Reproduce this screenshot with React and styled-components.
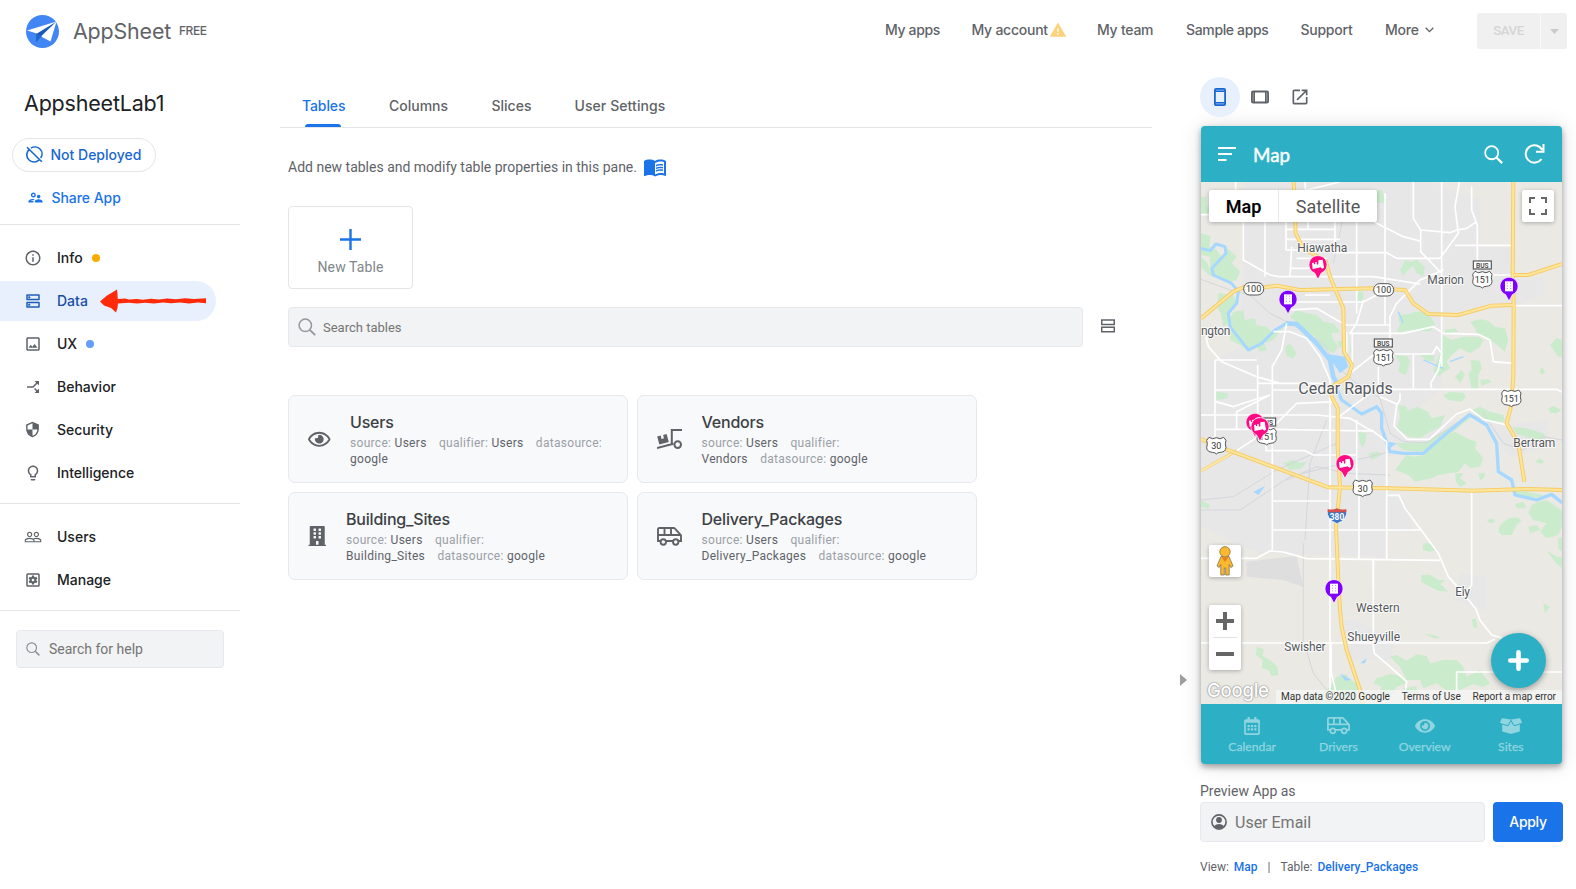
import React from "react";
import styled, { createGlobalStyle, css } from "styled-components";
import {
  MdInfoOutline,
  MdOutlineDns,
  MdOutlineImage,
  MdCallSplit,
  MdSecurity,
  MdLightbulbOutline,
  MdPeopleOutline,
  MdOutlineSettingsApplications,
  MdOutlineSupervisorAccount,
  MdMenuBook,
  MdOpenInNew,
  MdWarning,
} from "react-icons/md";
import { FaRegEye, FaEye, FaBuilding, FaRegCalendarAlt, FaBoxOpen } from "react-icons/fa";

const Global = createGlobalStyle`
  * { box-sizing: border-box; }
  body { margin: 0; background: #fff; font-family: Roboto, "Liberation Sans", sans-serif; color: #5f6368; }
  svg { display: block; flex: none; }
`;

const brandFont = css`
  font-family: Inter, Roboto, sans-serif;
`;

/* ---------- layout ---------- */

const Page = styled.div`
  width: 1576px;
  height: 889px;
  overflow: hidden;
  display: flex;
  flex-direction: column;
`;

const Header = styled.header`
  ${brandFont}
  height: 62px;
  flex: none;
  display: flex;
  align-items: center;
  padding: 0 9px 0 26px;
`;

const Brand = styled.div`
  font-size: 21.4px;
  letter-spacing: -0.15px;
  margin-left: 14px;
  padding-bottom: 1px;
  width: 106px;
  white-space: nowrap;
`;

const Plan = styled.div`
  font-size: 12px;
  font-weight: 500;
  letter-spacing: -0.45px;
  padding-bottom: 2px;
`;

const TopNav = styled.nav`
  margin-left: auto;
  display: flex;
  align-items: center;
`;

const TopLink = styled.a`
  display: flex;
  align-items: center;
  gap: ${(p) => p.$gap || 1}px;
  width: ${(p) => p.$w}px;
  padding-bottom: 3px;
  font-size: 14px;
  font-weight: 500;
  letter-spacing: ${(p) => p.$ls || -0.25}px;
  white-space: nowrap;
`;

const SaveGroup = styled.div`
  display: flex;
  height: 36px;
  width: 90px;
  background: #f0f0f0;
  border-radius: 3px;
  color: #d5d5d5;
`;

const SaveLabel = styled.div`
  flex: 1;
  display: flex;
  align-items: center;
  justify-content: center;
  padding-bottom: 1px;
  font-family: Roboto, sans-serif;
  font-size: 13.3px;
  font-weight: 500;
  letter-spacing: -0.5px;
  border-right: 1px solid #fafafa;
`;

const SaveCaret = styled.div`
  width: 26px;
  display: flex;
  align-items: center;
  justify-content: center;
`;

const Body = styled.div`
  flex: 1;
  display: flex;
`;

/* ---------- sidebar ---------- */

const Sidebar = styled.aside`
  ${brandFont}
  width: 240px;
  flex: none;
`;

const AppName = styled.h1`
  margin: 0;
  padding: 26px 0 0 24px;
  height: 76px;
  font-size: 21.5px;
  line-height: 31px;
  font-weight: 400;
  letter-spacing: -0.2px;
  color: #202124;
`;

const DeployPill = styled.div`
  margin-left: 12px;
  width: 144px;
  height: 34px;
  border: 1px solid #e3e5e8;
  border-radius: 17px;
  display: flex;
  align-items: center;
  gap: 7.5px;
  padding: 0 0 1px 13px;
  font-size: 14px;
  font-weight: 500;
  letter-spacing: 0;
  color: #1967d2;
  white-space: nowrap;
`;

const ShareLink = styled.div`
  height: 52px;
  display: flex;
  align-items: center;
  gap: 7.5px;
  padding: 0 0 2px 27px;
  font-size: 14px;
  font-weight: 500;
  letter-spacing: -0.05px;
  color: #1a73e8;
`;

const NavGroup = styled.div`
  border-top: 1px solid #e4e6ea;
  padding: ${(p) => p.$pad};
`;

const NavItem = styled.div`
  position: relative;
  width: 216px;
  height: 40px;
  margin-bottom: 3px;
  display: flex;
  align-items: center;
  padding: 0 0 1px 24px;
  border-radius: 0 20px 20px 0;
  font-size: 14px;
  font-weight: 500;
  color: ${(p) => (p.$active ? "#174ea6" : "#202124")};
  background: ${(p) => (p.$active ? "#e8f0fe" : "transparent")};
`;

const NavIcon = styled.span`
  width: 33px;
  color: ${(p) => (p.$active ? "#1f5cb8" : "#5f6368")};
  svg { transform: ${(p) => (p.$turn ? "rotate(90deg)" : "none")}; }
`;

const Dot = styled.span`
  width: 8px;
  height: 8px;
  border-radius: 50%;
  margin-left: 9px;
  background: ${(p) => p.$color};
`;

const Arrow = styled.svg`
  position: absolute;
  left: 99px;
  top: 8px;
`;

const Field = styled.div`
  display: flex;
  align-items: center;
  background: #f1f3f4;
  border: 1px solid #e6e8eb;
  border-radius: 4px;
  color: #757575;
  font-family: Roboto, sans-serif;
  width: ${(p) => p.$w}px;
  height: ${(p) => p.$h}px;
  padding-left: ${(p) => p.$pl}px;
  gap: ${(p) => p.$gap}px;
  font-size: ${(p) => p.$fs}px;
  letter-spacing: ${(p) => p.$ls || 0}px;
`;

const HelpWrap = styled.div`
  border-top: 1px solid #e4e6ea;
  padding: 19px 16px;
`;

/* ---------- main ---------- */

const Main = styled.main`
  width: 872px;
  margin-left: 40px;
  flex: none;
`;

const Tabs = styled.div`
  ${brandFont}
  height: 66px;
  padding: 20px 0 0 22px;
  display: flex;
  border-bottom: 1px solid #e4e6ea;
`;

const Tab = styled.div`
  height: 45px;
  width: ${(p) => p.$w}px;
  font-size: 14px;
  font-weight: 500;
  letter-spacing: ${(p) => p.$ls || 0}px;
  line-height: 48px;
  color: ${(p) => (p.$active ? "#1a73e8" : "#5f6368")};
`;

const Underline = styled.div`
  width: 36px;
  height: 3px;
  margin: -3px 0 0 3px;
  border-radius: 3px 3px 0 0;
  background: #1a73e8;
`;

const Content = styled.div`
  padding: 28px 0 0 8px;
`;

const Intro = styled.div`
  display: flex;
  align-items: center;
  gap: 6px;
  height: 22px;
  font-size: 14px;
  white-space: nowrap;
  padding-bottom: 1px;
`;

const NewTable = styled.button`
  margin: 28px 0 18px;
  width: 125px;
  height: 83px;
  border: 1px solid #e3e5e8;
  border-radius: 4px;
  background: #fff;
  padding: 8px 0 0;
  display: flex;
  flex-direction: column;
  align-items: center;
  justify-content: center;
  gap: 9px;
  font: 400 14px Roboto, sans-serif;
  letter-spacing: 0.1px;
  color: #80868b;
`;

const SearchRow = styled.div`
  display: flex;
  align-items: center;
  gap: 18px;
  color: #5f6368;
`;

const CardGrid = styled.div`
  margin-top: 48px;
  display: grid;
  grid-template-columns: 340px 340px;
  gap: 9px;
`;

const Card = styled.div`
  height: 88px;
  border: 1px solid #e6e8ec;
  border-radius: 7px;
  background: #f8f9fb;
  display: flex;
  align-items: center;
  gap: 19.5px;
  padding-left: 19px;
`;

const CardText = styled.div`
  width: 256px;
`;

const CardTitle = styled.div`
  ${brandFont}
  font-size: 16px;
  font-weight: 500;
  letter-spacing: -0.2px;
  line-height: 22px;
  margin-bottom: 2px;
  color: #3c4043;
`;

const Meta = styled.div`
  font-size: 12px;
  line-height: 16px;
  letter-spacing: 0.3px;
  color: #9aa0a6;
  b { font-weight: 400; color: #5f6368; margin-right: 9px; }
`;

const Keep = styled.span`
  white-space: nowrap;
`;

/* ---------- preview ---------- */

const Collapse = styled.div`
  width: 48px;
  padding: 612px 0 0 28px;
`;

const Preview = styled.aside`
  width: 363px;
  padding-top: 15px;
`;

const Devices = styled.div`
  display: flex;
  height: 40px;
  margin-bottom: 9px;
`;

const Device = styled.div`
  width: 40px;
  height: 40px;
  border-radius: 50%;
  display: flex;
  align-items: center;
  justify-content: center;
  color: ${(p) => (p.$active ? "#1a67d2" : "#5f6368")};
  background: ${(p) => (p.$active ? "#e8f0fe" : "transparent")};
`;

const Phone = styled.div`
  margin-left: 1px;
  width: 361px;
  height: 638px;
  border-radius: 4px;
  overflow: hidden;
  background: #2db0c5;
  box-shadow: 0 3px 6px rgba(0, 0, 0, 0.35), 0 1px 22px rgba(0, 0, 0, 0.13);
`;

const PhoneBar = styled.div`
  height: 56px;
  display: flex;
  align-items: center;
  padding: 0 17px 0 17px;
  color: #fff;
  font: 400 18.8px Lato, sans-serif;
`;

const PhoneTitle = styled.div`
  margin: 1px auto 0 17px;
  -webkit-text-stroke: 0.45px currentColor;
`;

const MapArea = styled.div`
  position: relative;
  height: 522px;
`;

const Floating = styled.div`
  position: absolute;
  display: flex;
  align-items: center;
  justify-content: center;
  background: #fff;
  border-radius: 2px;
  box-shadow: 0 1px 4px rgba(0, 0, 0, 0.28);
`;

const MapType = styled(Floating)`
  left: 8px;
  top: 8px;
  height: 32px;
  width: 168px;
  font-size: 18px;
  color: #565656;
`;

const MapTypeOption = styled.div`
  flex: none;
  width: ${(p) => p.$w}px;
  text-align: center;
  height: 32px;
  line-height: 34px;
  font-weight: ${(p) => (p.$on ? 500 : 400)};
  color: ${(p) => (p.$on ? "#000" : "#565656")};
  -webkit-text-stroke: ${(p) => (p.$on ? "0.2px #000" : "0")};
  border-right: ${(p) => (p.$on ? "1px solid #e8e8e8" : 0)};
`;

const Fullscreen = styled(Floating)`
  right: 8px;
  top: 8px;
  width: 32px;
  height: 32px;
`;

const Pegman = styled(Floating)`
  left: 8px;
  top: 363px;
  width: 32px;
  height: 32px;
`;

const ZoomBox = styled(Floating)`
  left: 8px;
  top: 423px;
  width: 32px;
  height: 65px;
`;

const AddButton = styled(Floating)`
  right: 16px;
  top: 451px;
  width: 55px;
  height: 55px;
  border-radius: 50%;
  background: #2db0c5;
  box-shadow: 0 2px 6px rgba(0, 0, 0, 0.35);
`;

const GoogleMark = styled.div`
  position: absolute;
  left: 6px;
  bottom: 2px;
  ${brandFont}
  font-size: 18.5px;
  font-weight: 500;
  letter-spacing: -0.25px;
  line-height: 24px;
  color: #fff;
  text-shadow: 0 0 2px #888, 0 0 1px #777;
`;

const Attribution = styled.div`
  position: absolute;
  right: 0;
  bottom: 0;
  height: 14px;
  width: 286px;
  padding: 0 6px 1px 5px;
  display: flex;
  justify-content: space-between;
  align-items: center;
  background: rgba(245, 245, 245, 0.75);
  font-size: 10px;
  color: #333;
  white-space: nowrap;
`;

const PhoneNav = styled.div`
  height: 60px;
  padding: 0 8px;
  display: flex;
`;

const PhoneTab = styled.div`
  flex: 1;
  display: flex;
  flex-direction: column;
  align-items: center;
  padding-top: 13px;
  gap: 4px;
  color: #91d5e0;
  font: 400 12.2px/16px Lato, sans-serif;
  -webkit-text-stroke: 0.25px currentColor;
`;

const PhoneTabIcon = styled.div`
  height: 18px;
  display: flex;
  align-items: center;
`;

const PreviewLabel = styled.div`
  margin-top: 19px;
  height: 19px;
  font-size: 14px;
  line-height: 17px;
`;

const ApplyRow = styled.div`
  display: flex;
  gap: 8px;
`;

const Apply = styled.button`
  ${brandFont}
  width: 70px;
  height: 40px;
  border: 0;
  padding: 0 0 1px;
  border-radius: 4px;
  background: #1a73e8;
  color: #fff;
  font-size: 14px;
  font-weight: 500;
  letter-spacing: -0.3px;
`;

const Status = styled.div`
  margin-top: 17px;
  display: flex;
  font-size: 12px;
  line-height: 16px;
  white-space: nowrap;
  b { font-weight: 500; color: #1a73e8; margin-left: 5px; }
  i { font-style: normal; margin: 0 10px 0 10px; }
`;

/* ---------- drawings ---------- */

const Search = ({ size, color, w = 1.5 }) => (
  <svg width={size} height={size} viewBox="0 0 18 18" fill="none" stroke={color} strokeWidth={w}>
    <circle cx="7.3" cy="7.3" r="6.2" />
    <path d="M11.8 11.8 17.2 17.2" strokeWidth={w * 1.25} />
  </svg>
);

const Logo = () => (
  <svg width="33" height="33" viewBox="0 0 33 33">
    <circle cx="16.5" cy="16.5" r="16.5" fill="#4285f4" />
    <path d="M10.5 18.5 30 7 17 19 10 27Z" fill="#1a56b8" />
    <path d="M1 15.5 30.5 6.5 11 18.5Z" fill="#fff" />
    <path d="M30.5 6.5 24.5 26.5 15 21.5Z" fill="#fff" />
    <path d="M10 27 10.5 18.8 16 21Z" fill="#2466cf" />
  </svg>
);

const NotDeployed = () => (
  <svg width="17" height="17" viewBox="0 0 17 17" fill="none" stroke="currentColor" strokeWidth="1.6">
    <path d="M5 2.2A7 7 0 0 1 14.7 12M13 14A7 7 0 0 1 3 3.6M1 1.2 15.8 15.8" />
  </svg>
);

const Agenda = () => (
  <svg width="14" height="14" viewBox="0 0 14 14" fill="none" stroke="currentColor" strokeWidth="1.5" style={{ marginBottom: 3 }}>
    <path d="M.75 1H13.25V5.5H.75ZM.75 8.2H13.25V12.7H.75Z" />
  </svg>
);

const Handset = ({ turned }) => (
  <svg width="20" height="20" viewBox="0 0 20 20" fill="none" stroke="currentColor">
    <g transform={turned ? "rotate(90 10 10) translate(10 10) scale(1.1 1) translate(-10 -10)" : undefined}>
      <rect x="4.9" y="1.9" width="10.2" height="16.2" rx="1.2" strokeWidth="1.8" />
      <path d="M5 4.2H15M5 15.8H15" strokeWidth="1.6" />
      <path d="M5 3H15M5 17H15" strokeWidth="1.2" opacity=".6" />
    </g>
  </svg>
);

const Van = ({ w }) => (
  <svg width={w} height={w * 0.76} viewBox="0 0 25 19" fill="none" stroke="currentColor" strokeWidth="1.9">
    <path d="M4 14H1V2.2Q1 1 2.2 1H16.5Q17.4 1 18 1.7L24 8.3V14H21.5M8.8 14H16.2M1 8H24M7.5 1V8M14 1V8" />
    <circle cx="6.3" cy="15" r="2.7" />
    <circle cx="18.7" cy="15" r="2.7" />
  </svg>
);

const Dolly = () => (
  <svg width="25" height="20" viewBox="0 0 25 20" fill="none" stroke="currentColor" strokeWidth="2">
    <path d="M0 19 16.5 14.8M25 1H14.8V14.5" />
    <circle cx="20.7" cy="15.6" r="3.3" />
    <path d="M0.2 7.5 3.6 6.6 4.6 10 7 9.3 6.1 6 9.6 5 11.8 13 2.3 15.6Z" fill="currentColor" stroke="none" />
  </svg>
);

const UserCircle = () => (
  <svg width="16" height="16" viewBox="0 0 16 16">
    <circle cx="8" cy="8" r="7.1" fill="none" stroke="#5f6368" strokeWidth="1.6" />
    <circle cx="8" cy="6" r="2.9" fill="#5f6368" />
    <path d="M2.7 12.2Q8 7.8 13.3 12.2 8 17.5 2.7 12.2Z" fill="#5f6368" />
  </svg>
);

/* ---------- map ---------- */

const parks = [
  "33,50 50,50 50,80 80,80 80,104 33,104",
  "155,30 190,38 230,30 250,45 240,58 195,60",
  "500,35 540,34 575,30 590,70 560,66 550,48 510,55",
  "33,160 62,168 58,200 78,208 100,235 112,205 140,230 125,250 150,275 140,300 120,305 85,290 60,275 60,230 33,225",
  "33,230 50,245 60,270 75,285 60,288 33,262",
  "85,340 130,345 140,370 115,400 118,430 100,440 92,400 80,380",
  "120,415 130,395 160,390 165,420 195,415 200,435 230,440 245,455 268,440 290,430 250,480 215,492 180,515 150,495 120,480",
  "200,500 222,490 232,510 210,515",
  "285,500 300,492 320,520 310,535 290,530",
  "300,410 320,390 345,398 380,405 400,425 430,430 450,455 425,460 430,480 445,500 430,520 395,500 375,470 340,445",
  "630,270 645,240 665,246 680,238 705,262 700,290 680,280 668,258 650,275 640,288",
  "280,850 310,840 330,848 350,845 335,865 300,870",
  "505,755 530,760 525,790 518,802 508,785",
  "535,820 565,815 575,825 545,840",
  "33,960 60,975 55,985 33,980",
  "694,1185 720,1184 745,1200 765,1200 752,1212 775,1235 745,1232 720,1220 694,1205",
  "700,1360 730,1365 752,1372 735,1376",
  "200,1400 222,1408 218,1428 240,1440 262,1460 265,1485 245,1488 235,1470 215,1465 218,1440 198,1425",
  "440,1490 470,1482 478,1498 500,1510 515,1560 520,1572 350,1572 345,1560 395,1540 420,1520",
  "600,1430 620,1425 650,1442 680,1423 710,1428 720,1450 760,1440 800,1440 820,1460 830,1490 870,1470 900,1510 880,1522 850,1512 810,1530 770,1532 740,1510 700,1525 690,1500 650,1500 630,1460",
  "560,1495 600,1482 640,1490 650,1510 620,1520 600,1555 570,1540 575,1520 550,1510",
  "640,1525 680,1518 680,1550 650,1545",
  "500,335 520,335 520,365 500,365",
  "440,485 465,480 450,505",
  "78,635 115,640 110,655 80,660",
  "845,1318 858,1316 862,1345 850,1342",
  "1060,1270 1080,1280 1065,1300",
  "1070,1112 1100,1130 1116,1130 1116,1165 1098,1150",
  "480,500 478,485 485,510 480,525",
];

/* parks east of the river, in their own origin */
const eastParks = [
  "55,75 90,72 100,65 130,65 155,85 165,105 150,125 90,120 50,128 60,105",
  "195,120 225,115 235,125 195,130",
  "270,95 300,88 325,92 345,110 375,115 385,150 375,185 345,160 290,130 285,115",
  "188,135 215,150 250,140 295,140 310,150 300,170 270,190 240,175 215,195 200,215 210,235 170,260 160,240 180,190",
  "45,195 80,198 90,215 78,255 55,245 60,220",
  "120,195 160,193 165,215 140,212",
  "225,260 245,240 255,255 240,280",
  "272,210 300,212 305,235 295,255 295,298 275,298 265,250 275,240",
  "300,270 325,268 335,275 305,288",
  "510,165 530,145 550,150 550,200 535,200",
  "478,242 486,232 496,245 486,255",
  "190,315 210,306 250,308 258,320 245,335 205,330",
  "55,345 75,348 85,362 110,350 145,365 155,385 195,375 180,410 150,425 120,445 85,440 50,415 60,380",
  "80,458 140,455 180,430 265,378 275,380 200,440 150,480 110,485 70,480 45,460",
  "275,360 300,350 330,365 370,375 375,395 340,395 295,385",
  "398,410 440,415 490,430 500,445 470,450 410,432",
  "505,355 520,348 545,360 530,370 510,368",
  "80,495 100,500 130,495 180,450 225,425 260,445 290,455 285,475 310,505 300,530 270,535 255,520 235,545 175,555 155,565 105,575 85,555 45,540 60,520",
  "225,550 250,550 240,565 260,580 240,592 228,575",
  "295,550 315,548 312,565 300,570",
  "395,598 440,605 490,615 480,622 440,622 405,615",
  "320,690 340,685 345,695 330,700",
  "360,705 385,685 410,682 425,690 410,705 395,735 365,735 355,725",
  "405,642 430,635 440,655 410,655",
  "455,645 475,635 500,630 550,665 550,700 535,735 500,745 480,725 500,700 460,690 445,670",
  "445,710 470,705 480,720 450,730",
  "535,745 550,740 550,790 535,775",
  "130,758 155,762 170,780 150,785 128,780",
  "465,515 480,505 492,515 485,522",
];

const urban = [
  "160,6 720,6 870,60 870,200 960,200 960,290 1000,300 960,375 755,400 755,628 590,760 590,1130 250,1120 80,900 75,540 150,500 160,300",
  "33,540 80,540 250,900 230,1130 33,1040",
  "960,375 1000,300 1060,290 1060,345 980,377",
  "590,700 800,730 760,790 590,830",
  "880,720 950,735 1075,720 1075,800 960,830",
  "460,1320 500,1320 550,1350 620,1370 600,1440 480,1440",
  "810,1180 890,1190 890,1290 790,1260",
  "590,940 630,946 660,1000 670,1060 590,1045",
];

const water = [
  "M33 205 60 212 78 192 105 200 108 220 66 265 70 285 125 310 145 335 140 370 115 400 120 440 150 478 175 510 215 490 255 450 290 430 320 432 380 490 420 540 430 590 445 620",
  "M440 625 455 660 515 702 560 680 575 700 575 745 600 815 640 820 700 820 760 768 838 704 890 735 920 790 925 875 965 900 975 945 1040 960 1085 943 1116 968",
];

const roads = [
  "M137 6V60M160 120V240L240 285 265 290M225 120V290M33 104 60 104M288 125V210H415M305 200 300 290M345 6 355 150M350 30 450 6M285 148H435M290 178H450",
  "M545 120 560 130 640 170 690 183M670 6V115L692 150V215L755 280V560M755 6V280M808 6 795 80 805 160 750 235 620 235 590 218H430M845 20V90L862 135V280M692 150 780 158 800 150 830 145 860 125M795 196H965",
  "M585 40V435M500 90V400M435 125V190M320 235H410M300 265H410M265 290H550L690 312M345 345H420M300 390 380 385 440 420 470 435H600M310 366H520L560 345 590 330M600 540V410L620 370 690 300 760 270M520 360 500 430 480 460H600",
  "M550 525 480 580M470 455V530M487 455V570M615 522H728L740 500 755 520 745 570 722 610 725 625M670 525V628M600 460H640L730 440 760 460 865 463 900 480 910 545 968 550M885 285H968M970 377H1116",
  "M48 470 55 500 95 545 200 590 270 610M75 540H200M75 540V800M203 555V780M250 455H300L350 475 390 530 420 600 420 640M247 555V1110M290 430 275 510 247 560V630H440M203 610H400M33 705H380L480 715M78 630H200M78 665 130 680 160 670 240 645M140 750V695L240 645M78 748H250L545 753M228 780V812H345L370 825H500M140 812 250 740 320 670 440 665M565 560V620M420 640V780",
  "M480 628H1100L1116 636M630 640 630 660 620 675 612 738 652 778H718L800 702 840 687 880 718 950 735M570 650 620 672M545 750 590 785V1140M500 720V930M420 700V1560M480 715 545 753M440 715 540 640",
  "M247 963H418M247 1050H695M507 930V1138M590 946H627L645 985 745 1120 775 1190 820 1240 858 1288 870 1320 905 1365 940 1375M33 1135H200L240 1113 280 1116 350 1136 750 1141M845 935V1215L830 1235M550 1140V1230",
  "M33 1389H890L915 1378M550 1140 550 1400 553 1420 600 1460 650 1505 645 1545M423 1390V1475L440 1545M800 1540V1476H1116",
];

const highways = [
  "M33 415 130 335 160 322H225L260 317 330 330 550 325 645 330 670 370 715 402 805 405 905 377 970 375",
  "M968 285H1015L1116 252",
  "M33 777 100 805 415 922 600 925 850 932 1020 927 1116 930",
  "M970 6 968 285 971 375 970 590 963 680 950 730 985 790 1003 905",
  "M311 6 317 160 340 205 408 245 420 290 460 385 462 515 486 555 475 590 425 620 425 650 443 685V800L450 920 438 1040 445 1200 450 1290 455 1340 470 1410 510 1530 520 1572",
];

const places = [
  ["Hiawatha", 322, 217, 150, 36],
  ["Marion", 712, 312, 110, 36],
  ["ngton", 33, 465, 88, 36],
  ["Cedar Rapids", 325, 641, 283, 48],
  ["Bertram", 970, 802, 126, 36],
  ["Ely", 796, 1248, 44, 36],
  ["Western", 498, 1296, 131, 36],
  ["Shueyville", 472, 1384, 158, 36],
  ["Swisher", 283, 1414, 124, 36],
];

const Shield = ({ x, y, label, bus }) => (
  <g>
    {bus && (
      <g>
        <rect x={x - 27} y={y - 57} width="54" height="24" fill="#fff" stroke="#555" strokeWidth="3.5" />
        <text x={x} y={y - 37} textAnchor="middle" fontSize="20" fontWeight="600" fill="#444">BUS</text>
      </g>
    )}
    <path
      d={`M${x - 22} ${y - 26}Q${x - 11} ${y - 18} ${x} ${y - 25}Q${x + 11} ${y - 18} ${x + 22} ${y - 26}L${x + 29} ${y - 17}Q${x + 25} ${y - 8} ${x + 29} ${y + 5}Q${x + 28} ${y + 18} ${x + 12} ${y + 19}Q${x + 4} ${y + 19} ${x} ${y + 24}Q${x - 4} ${y + 19} ${x - 12} ${y + 19}Q${x - 28} ${y + 18} ${x - 29} ${y + 5}Q${x - 25} ${y - 8} ${x - 29} ${y - 17}Z`}
      fill="#fff"
      stroke="#555"
      strokeWidth="3"
    />
    <text x={x} y={y + 10} textAnchor="middle" fontSize="27" fill="#333">{label}</text>
  </g>
);

const Route = ({ x, y }) => (
  <g>
    <rect x={x - 30} y={y - 18} width="60" height="37" rx="18" fill="#fff" stroke="#555" strokeWidth="3" />
    <text x={x} y={y + 10} textAnchor="middle" fontSize="27" fill="#333">100</text>
  </g>
);

const Pin = ({ x, y, kind }) => {
  const site = kind === "site";
  return (
    <g transform={`translate(${x} ${y})`}>
      <path
        d="M0 45 -10 26A27 27 0 1 1 10 26Z"
        fill={site ? "#8000ff" : "#ff0a85"}
        stroke="#fff"
        strokeWidth="2"
      />
      {site ? (
        <g>
          <path d="M-12 -14H12V16H-12Z" fill="#fff" />
          <path d="M-5 -10V10M5 -10V10" stroke="#8000ff" strokeWidth="3" strokeDasharray="3 5" opacity=".5" />
        </g>
      ) : (
        <path d="M-18 -4 -13 -5 -12 0 -8 -1 -9 -6 -4 -7 -3 1 1 0V-12L14 -14 18 10 13 13 8 9 2 10 -16 14Z" fill="#fff" />
      )}
    </g>
  );
};

const MapDrawing = () => (
  <svg width="361" height="522" viewBox="33 6 1083 1566" fontFamily="Roboto, sans-serif">
    <rect x="33" y="6" width="1083" height="1566" fill="#ebe9e4" />
    {urban.map((p) => <polygon key={p} points={p} fill="#e7e7e8" />)}
    <path d="M170 1145 320 1128 340 1220 280 1200 170 1190Z" fill="#dedede" />
    {parks.map((p) => <polygon key={p} points={p} fill="#cbebcd" />)}
    <g transform="translate(570 330)">
      {eastParks.map((p) => <polygon key={p} points={p} fill="#cbebcd" />)}
    </g>
    <g fill="none" stroke="#d4d6da" strokeWidth="3">
      <path d="M33 298 120 330 180 345 240 400 300 430 400 490 440 560 500 610 570 655 600 760 640 785 710 788 770 750 838 700 880 720M345 1080 360 850 410 720M33 960 130 950 260 870 440 790M33 990 150 990 300 890 420 860 600 815M340 1090 340 1380 370 1480 410 1530M460 40V110L430 250" />
      <path d="M290 900 380 860 470 880 600 885M880 700 940 790 1000 810 1060 770 1116 780" />
    </g>
    <g fill="none" stroke="#a6d8ff" strokeLinejoin="round">
      <path d={water[0]} strokeWidth="9" />
      <path d="M290 430 320 432 380 490 420 540 430 590 445 620" strokeWidth="14" />
      <path d={water[1]} strokeWidth="10" />
      <path d="M625 395 640 430M700 540 760 565M780 545 820 530" strokeWidth="4" />
    </g>
    <path d="M395 520 465 530 475 560 450 580 430 550ZM190 935 225 918 205 945ZM450 1480 485 1500 465 1502ZM510 1450 530 1435 525 1450ZM595 785 620 790 600 805Z" fill="#a6d8ff" />
    <g fill="none" stroke="#fff" strokeWidth="5" strokeLinejoin="round">
      {roads.map((d) => <path key={d} d={d} />)}
    </g>
    <g fill="none" strokeLinejoin="round">
      <path d="M33 873 140 812" stroke="#f4cf73" strokeWidth="9" />
      <path d="M33 873 140 812" stroke="#feeaa6" strokeWidth="5" />
      {highways.map((d) => <path key={d} d={d} stroke="#f6cb62" strokeWidth="12" />)}
      {highways.map((d) => <path key={d} d={d} stroke="#fee59c" strokeWidth="6.5" />)}
    </g>
    {places.map(([name, x, y, w, size]) => (
      <text
        key={name}
        x={x}
        y={y}
        textLength={w}
        fontSize={size}
        fill="#55585c"
        stroke="#fff"
        strokeOpacity=".8"
        strokeWidth="6"
        strokeLinejoin="round"
        paintOrder="stroke"
      >
        {name}
      </text>
    ))}
    <Route x={191} y={326} />
    <Route x={581} y={329} />
    <Shield x={877} y={300} label="151" bus />
    <Shield x={580} y={534} label="151" bus />
    <Shield x={964} y={656} label="151" />
    <Shield x={79} y={798} label="30" />
    <Shield x={230} y={771} label="151" bus />
    <Shield x={518} y={926} label="30" />
    <path d="M412 990H470Q474 1018 441 1031 408 1018 412 990Z" fill="#3e78c4" stroke="#fff" strokeWidth="2" />
    <path d="M413 997V987Q427 991 441 985 455 991 469 987V997Z" fill="#d3524f" />
    <text x="441" y="1020" textAnchor="middle" fontSize="25" fontWeight="700" fill="#fff">380</text>
    <Pin x={384} y={253} />
    <Pin x={294} y={357} kind="site" />
    <Pin x={957} y={318} kind="site" />
    <Pin x={195} y={726} />
    <Pin x={210} y={739} />
    <Pin x={465} y={850} />
    <Pin x={432} y={1225} kind="site" />
  </svg>
);

/* ---------- data ---------- */

const nav = [
  { label: "Info", icon: <MdInfoOutline size={18} />, dot: "#f9ab00" },
  { label: "Data", icon: <MdOutlineDns size={18} />, active: true },
  { label: "UX", icon: <MdOutlineImage size={18} />, dot: "#669df6" },
  { label: "Behavior", icon: <MdCallSplit size={18} />, turn: true },
  { label: "Security", icon: <MdSecurity size={17} /> },
  { label: "Intelligence", icon: <MdLightbulbOutline size={18} /> },
];

const admin = [
  { label: "Users", icon: <MdPeopleOutline size={18} /> },
  { label: "Manage", icon: <MdOutlineSettingsApplications size={18} /> },
];

const tables = [
  { name: "Users", icon: <FaRegEye size={22.5} /> },
  { name: "Vendors", icon: <Dolly /> },
  { name: "Building_Sites", icon: <FaBuilding size={20} style={{ width: 18.5 }} /> },
  { name: "Delivery_Packages", icon: <Van w={25} /> },
];

const NavList = ({ items }) =>
  items.map((it) => (
    <NavItem key={it.label} $active={it.active}>
      <NavIcon $active={it.active} $turn={it.turn}>{it.icon}</NavIcon>
      {it.label}
      {it.dot && <Dot $color={it.dot} />}
      {it.active && (
        <Arrow width="110" height="24" viewBox="0 0 110 24">
          <path d="M1 12.5 8 6.5 14 3 18 0.5 18.5 5 18.8 10 26 9.6 30 10.5 38 9.9 44 10.8 52 9.7 60 10.5 68 9.6 77 10.2 86 9.2 95 10 107 9.2V14.2L99 13.5 90 14.4 81 13.5 72 14.2 64 13.4 55 14.6 46 13.7 38 14.6 30 13.8 19 14.4 18.5 19 17 23.5 12 19 5 16.5Z" fill="#fe2a08" />
        </Arrow>
      )}
    </NavItem>
  ));

export default function App() {
  return (
    <Page>
      <Global />
      <Header>
        <Logo />
        <Brand>AppSheet</Brand>
        <Plan>FREE</Plan>
        <TopNav>
          <TopLink $w={86.5} $ls={-0.35}>My apps</TopLink>
          <TopLink $w={125.5}>My account <MdWarning size={18} color="#fdd27c" /></TopLink>
          <TopLink $w={89}>My team</TopLink>
          <TopLink $w={114.5} $ls={-0.35}>Sample apps</TopLink>
          <TopLink $w={84.5}>Support</TopLink>
          <TopLink $w={92} $gap={6}>
            More
            <svg width="9" height="6" viewBox="0 0 9 6" fill="none" stroke="currentColor" strokeWidth="1.3">
              <path d="M0.7 0.7 4.5 4.6 8.3 0.7" />
            </svg>
          </TopLink>
          <SaveGroup>
            <SaveLabel>SAVE</SaveLabel>
            <SaveCaret>
              <svg width="9" height="5" viewBox="0 0 9 5"><path d="M0 0H9L4.5 5Z" fill="#cacaca" /></svg>
            </SaveCaret>
          </SaveGroup>
        </TopNav>
      </Header>
      <Body>
        <Sidebar>
          <AppName>AppsheetLab1</AppName>
          <DeployPill><NotDeployed />Not Deployed</DeployPill>
          <ShareLink><MdOutlineSupervisorAccount size={17} />Share App</ShareLink>
          <NavGroup $pad="13px 0 7px"><NavList items={nav} /></NavGroup>
          <NavGroup $pad="13px 0 7px"><NavList items={admin} /></NavGroup>
          <HelpWrap>
            <Field $w={208} $h={38} $pl={9} $gap={9} $fs={14}>
              <Search size={14} color="#8b8f94" />
              Search for help
            </Field>
          </HelpWrap>
        </Sidebar>
        <Main>
          <Tabs>
            <div>
              <Tab $w={87} $ls={-0.1} $active>Tables</Tab>
              <Underline />
            </div>
            <Tab $w={102.5}>Columns</Tab>
            <Tab $w={83}>Slices</Tab>
            <Tab $ls={0.08}>User Settings</Tab>
          </Tabs>
          <Content>
            <Intro>
              Add new tables and modify table properties in this pane.
              <MdMenuBook size={24} color="#1a73e8" />
            </Intro>
            <NewTable>
              <svg width="21" height="21" viewBox="0 0 21 21" stroke="#1a73e8" strokeWidth="2.4">
                <path d="M10.5 0V21M0 10.5H21" />
              </svg>
              New Table
            </NewTable>
            <SearchRow>
              <Field $w={795} $h={40} $pl={9} $gap={7} $fs={13}>
                <Search size={18} color="#94989d" />
                Search tables
              </Field>
              <Agenda />
            </SearchRow>
            <CardGrid>
              {tables.map((t) => (
                <Card key={t.name}>
                  {t.icon}
                  <CardText>
                    <CardTitle>{t.name}</CardTitle>
                    <Meta>
                      source: <b>Users</b> qualifier: <Keep><b>{t.name}</b> datasource:</Keep> <b>google</b>
                    </Meta>
                  </CardText>
                </Card>
              ))}
            </CardGrid>
          </Content>
        </Main>
        <Collapse>
          <svg width="7" height="12" viewBox="0 0 7 12"><path d="M0 0 7 6 0 12Z" fill="#9e9e9e" /></svg>
        </Collapse>
        <Preview>
          <Devices>
            <Device $active><Handset /></Device>
            <Device><Handset turned /></Device>
            <Device><MdOpenInNew size={20} /></Device>
          </Devices>
          <Phone>
            <PhoneBar>
              <svg width="18" height="14" viewBox="0 0 18 14" stroke="#fff" strokeWidth="2">
                <path d="M0 1H18M0 7H14M0 13H8.5" />
              </svg>
              <PhoneTitle>Map</PhoneTitle>
              <Search size={19} color="#fff" w={1.7} />
              <svg width="21" height="20" viewBox="0 0 21 20" fill="none" stroke="#fff" strokeWidth="2" style={{ marginLeft: 21 }}>
                <path d="M17.5 15A8.7 8.7 0 1 1 18.2 6M19.5 0V7.8H12" />
              </svg>
            </PhoneBar>
            <MapArea>
              <MapDrawing />
              <MapType>
                <MapTypeOption $on $w={70}>Map</MapTypeOption>
                <MapTypeOption $w={98}>Satellite</MapTypeOption>
              </MapType>
              <Fullscreen>
                <svg width="18" height="18" viewBox="0 0 18 18" fill="none" stroke="#666" strokeWidth="2">
                  <path d="M1 6V1H6M12 1H17V6M17 12V17H12M6 17H1V12" />
                </svg>
              </Fullscreen>
              <Pegman>
                <svg width="18" height="30" viewBox="0 0 18 30" fill="#fbb82d" stroke="#7d7458" strokeWidth="0.8">
                  <path d="M5 10.5H13L17 20 14.8 21.5 13.2 18.5V29H9.7V22H8.3V29H4.8V18.5L3.2 21.5 1 20Z" />
                  <circle cx="9" cy="5.8" r="5.2" />
                  <path d="M5.5 11.2H12.5L9 16Z" fill="#e5801f" stroke="none" />
                </svg>
              </Pegman>
              <ZoomBox>
                <svg width="24" height="65" viewBox="0 0 24 65" fill="none" stroke="#666" strokeWidth="4">
                  <path d="M12 7V25M3 16H21M3 49H21" />
                  <path d="M0 32.5H24" stroke="#e3e3e3" strokeWidth="1" />
                </svg>
              </ZoomBox>
              <GoogleMark>Google</GoogleMark>
              <Attribution>
                <span>Map data ©2020 Google</span>
                <span>Terms of Use</span>
                <span>Report a map error</span>
              </Attribution>
              <AddButton>
                <svg width="21" height="21" viewBox="0 0 21 21" stroke="#fff" strokeWidth="4.6" strokeLinecap="round">
                  <path d="M10.5 2.3V18.7M2.3 10.5H18.7" />
                </svg>
              </AddButton>
            </MapArea>
            <PhoneNav>
              <PhoneTab><PhoneTabIcon><FaRegCalendarAlt size={18} /></PhoneTabIcon>Calendar</PhoneTab>
              <PhoneTab><PhoneTabIcon><Van w={23} /></PhoneTabIcon>Drivers</PhoneTab>
              <PhoneTab><PhoneTabIcon><FaEye size={20} /></PhoneTabIcon>Overview</PhoneTab>
              <PhoneTab><PhoneTabIcon><FaBoxOpen size={22} /></PhoneTabIcon>Sites</PhoneTab>
            </PhoneNav>
          </Phone>
          <PreviewLabel>Preview App as</PreviewLabel>
          <ApplyRow>
            <Field $w={285} $h={40} $pl={10} $gap={8} $fs={16}>
              <UserCircle />
              User Email
            </Field>
            <Apply>Apply</Apply>
          </ApplyRow>
          <Status>
            View: <b>Map</b><i>|</i>Table: <b>Delivery_Packages</b>
          </Status>
        </Preview>
      </Body>
    </Page>
  );
}
